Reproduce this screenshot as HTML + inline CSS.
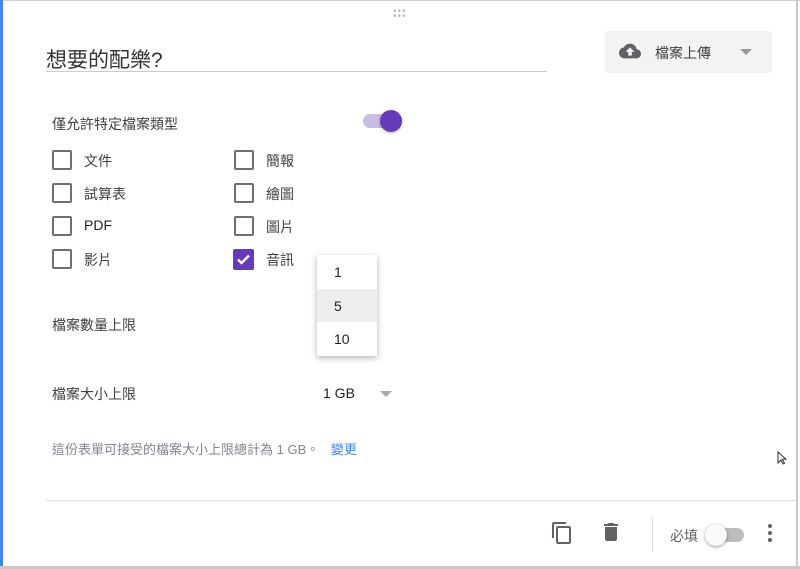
<!DOCTYPE html>
<html><head><meta charset="utf-8"><style>
*{margin:0;padding:0;box-sizing:border-box}
body{width:800px;height:569px;background:#fff;position:relative;overflow:hidden;font-family:"Liberation Sans","Noto Sans CJK TC",sans-serif;color:#212121}
.a{position:absolute}
.cb{position:absolute;width:20px;height:20px;border:2px solid #6f6f6f;border-radius:2px}
.lbl{position:absolute;font-size:14px;color:#3c4043}
</style></head><body>
<div class="a" style="left:0;top:0;width:800px;height:1px;background:#d0d0d0"></div>
<div class="a" style="left:0;top:0;width:3px;height:569px;background:#4285f4"></div>
<div class="a" style="left:796px;top:0;width:2px;height:569px;background:#c8c8c8"></div>
<div class="a" style="left:0;top:566px;width:800px;height:3px;background:#c8c8c8"></div>
<div class="a" style="left:393px;top:9px;font-size:10px;color:#bbb;letter-spacing:1px;line-height:5px">•••<br>•••</div>
<div class="a" style="left:46px;top:44px;font-size:21px;color:#333">想要的配樂?</div>
<div class="a" style="left:46px;top:71px;width:501px;height:1px;background:#ccc"></div>
<div class="a" style="left:605px;top:31px;width:167px;height:42px;background:#f3f3f3;border-radius:3px"></div>
<svg class="a" style="left:617px;top:40px" width="26" height="22" viewBox="0 0 24 24"><path fill="#5f6368" d="M19.35 10.04A7.49 7.49 0 0 0 12 4C9.11 4 6.6 5.64 5.35 8.04A5.994 5.994 0 0 0 0 14c0 3.31 2.69 6 6 6h13c2.76 0 5-2.24 5-5 0-2.640-2.05-4.78-4.65-4.96zM14 13v4h-4v-4H7l5-5 5 5h-3z"/></svg>
<div class="a" style="left:655px;top:43px;font-size:14px;color:#3c4043">檔案上傳</div>
<div class="a" style="left:740px;top:49px;border-left:6px solid transparent;border-right:6px solid transparent;border-top:6px solid #999"></div>
<div class="lbl" style="left:52px;top:114px">僅允許特定檔案類型</div>
<div class="a" style="left:363px;top:114px;width:36px;height:14px;border-radius:7px;background:#c9bde3"></div>
<div class="a" style="left:380px;top:110px;width:22px;height:22px;border-radius:50%;background:#673ab7;box-shadow:0 1px 3px rgba(0,0,0,.3)"></div>
<div class="cb" style="left:52px;top:150px"></div><div class="lbl" style="left:84px;top:151px">文件</div>
<div class="cb" style="left:52px;top:183px"></div><div class="lbl" style="left:84px;top:184px">試算表</div>
<div class="cb" style="left:52px;top:216px"></div><div class="lbl" style="left:84px;top:217px;color:#202124">PDF</div>
<div class="cb" style="left:52px;top:249px"></div><div class="lbl" style="left:84px;top:250px">影片</div>
<div class="cb" style="left:234px;top:150px"></div><div class="lbl" style="left:266px;top:151px">簡報</div>
<div class="cb" style="left:234px;top:183px"></div><div class="lbl" style="left:266px;top:184px">繪圖</div>
<div class="cb" style="left:234px;top:216px"></div><div class="lbl" style="left:266px;top:217px">圖片</div>
<div class="a" style="left:233px;top:249px;width:21px;height:21px;background:#673ab7;border-radius:2px"></div>
<svg class="a" style="left:233px;top:249px" width="21" height="21" viewBox="0 0 21 21"><path d="M5 10.5l3.5 3.5 7.5-7.5" stroke="#fff" stroke-width="2.4" fill="none"/></svg>
<div class="lbl" style="left:266px;top:250px">音訊</div>
<div class="lbl" style="left:52px;top:315px">檔案數量上限</div>
<div class="lbl" style="left:52px;top:384px">檔案大小上限</div>
<div class="a" style="left:323px;top:385px;font-size:14px;color:#202124">1 GB</div>
<div class="a" style="left:380px;top:391px;border-left:6px solid transparent;border-right:6px solid transparent;border-top:6px solid #aaa"></div>
<div class="a" style="left:317px;top:255px;width:60px;height:101px;background:#fff;box-shadow:0 2px 6px rgba(0,0,0,.3)">
<div style="height:34px;padding:9px 0 0 17px;font-size:14px">1</div>
<div style="height:33px;padding:9px 0 0 17px;font-size:14px;background:#eee">5</div>
<div style="height:34px;padding:9px 0 0 17px;font-size:14px">10</div>
</div>
<div class="a" style="left:52px;top:439px;font-size:13px;color:#80868b">這份表單可接受的檔案大小上限總計為 1 GB。 <span style="color:#4285f4;margin-left:8px">變更</span></div>
<svg class="a" style="left:777px;top:451px" width="10" height="14" viewBox="0 0 10 14"><path d="M1 1v11l3-3 2 4 1.5-.7-2-4H9z" fill="#fff" stroke="#333" stroke-width="1"/></svg>
<div class="a" style="left:46px;top:500px;width:750px;height:1px;background:#ddd"></div>
<svg class="a" style="left:550px;top:521px" width="24" height="24" viewBox="0 0 24 24"><path fill="#5f6368" d="M16 1H4c-1.1 0-2 .9-2 2v14h2V3h12V1zm3 4H8c-1.1 0-2 .9-2 2v14c0 1.1.9 2 2 2h11c1.1 0 2-.9 2-2V7c0-1.1-.9-2-2-2zm0 16H8V7h11v14z"/></svg>
<svg class="a" style="left:599px;top:520px" width="24" height="24" viewBox="0 0 24 24"><path fill="#5f6368" d="M6 19c0 1.1.9 2 2 2h8c1.1 0 2-.9 2-2V7H6v12zM19 4h-3.5l-1-1h-5l-1 1H5v2h14V4z"/></svg>
<div class="a" style="left:652px;top:517px;width:1px;height:34px;background:#ddd"></div>
<div class="a" style="left:670px;top:526px;font-size:14px;color:#5f6368">必填</div>
<div class="a" style="left:708px;top:528px;width:36px;height:14px;border-radius:7px;background:#bdbdbd"></div>
<div class="a" style="left:705px;top:524px;width:22px;height:22px;border-radius:50%;background:#fafafa;box-shadow:0 1px 3px rgba(0,0,0,.4)"></div>
<div class="a" style="left:768px;top:524px;width:4px;height:4px;border-radius:50%;background:#5f6368"></div>
<div class="a" style="left:768px;top:531px;width:4px;height:4px;border-radius:50%;background:#5f6368"></div>
<div class="a" style="left:768px;top:538px;width:4px;height:4px;border-radius:50%;background:#5f6368"></div>
</body></html>
